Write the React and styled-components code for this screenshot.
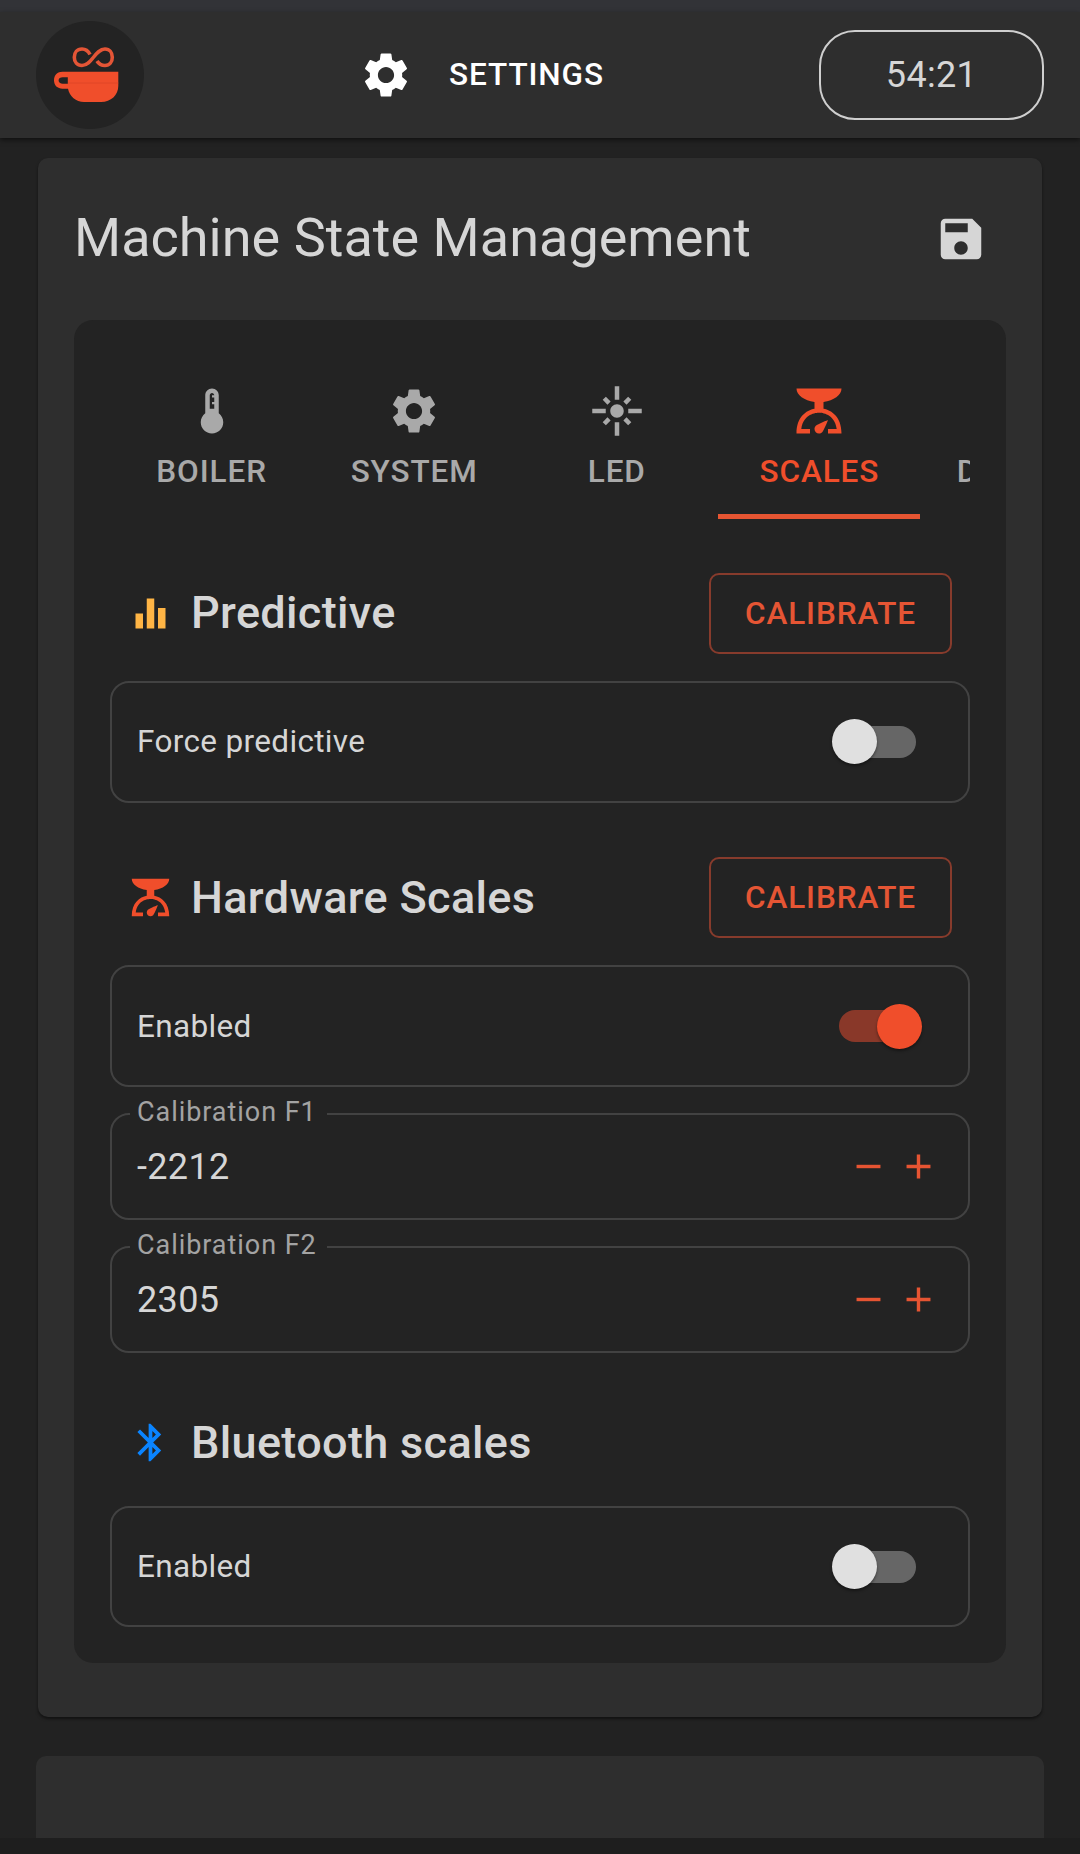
import React, { useState } from "react";
import styled, { createGlobalStyle } from "styled-components";
import {
  MdSettings,
  MdSave,
  MdDeviceThermostat,
  MdFlare,
  MdScale,
  MdEqualizer,
  MdBluetooth,
  MdAdd,
  MdRemove,
} from "react-icons/md";

const accent = "#f04e2b";
const surface = "#2e2e2e";
const base = "#222222";
const panel = "#232323";
const textColor = "#d6d6d6";

const GlobalStyle = createGlobalStyle`
  *, *::before, *::after { box-sizing: border-box; }
  body {
    margin: 0;
    background: ${base};
    color: ${textColor};
    font-family: Roboto, "Liberation Sans", sans-serif;
    -webkit-font-smoothing: antialiased;
  }
  svg { display: block; }
`;

const Page = styled.div`
  display: flex;
  flex-direction: column;
  height: 1854px;
  overflow: hidden;
  background: ${base};
`;

const StatusStrip = styled.div`
  flex: none;
  height: 12px;
  background: #323337;
`;

const AppBar = styled.header`
  flex: none;
  display: flex;
  align-items: center;
  justify-content: space-between;
  height: 126px;
  padding: 0 36px;
  background: ${surface};
  box-shadow: 0 2px 5px rgba(0, 0, 0, 0.55);
`;

const Logo = styled.div`
  width: 108px;
  height: 108px;
  border-radius: 50%;
  background: ${panel};
`;

const NavTitle = styled.div`
  display: flex;
  align-items: center;
  gap: 36px;
  color: #fff;
  font-size: 31.5px;
  font-weight: 500;
  letter-spacing: 0.9px;
  line-height: 36px;
`;

const Timer = styled.div`
  display: flex;
  align-items: center;
  justify-content: center;
  width: 225px;
  height: 90px;
  border: 2px solid #cfcfcf;
  border-radius: 36px;
  font-size: 36px;
  letter-spacing: 0.34px;
`;

const Content = styled.main`
  flex: 1;
  min-height: 0;
  display: flex;
  flex-direction: column;
  gap: 39px;
  padding-top: 20px;
  overflow: hidden;
`;

const Card = styled.section`
  flex: none;
  margin: 0 38px;
  padding: 0 36px 54px;
  border-radius: 10px;
  background: ${surface};
  box-shadow: 0 2px 3px rgba(0, 0, 0, 0.5);
`;

const NextCard = styled.section`
  flex: none;
  height: 120px;
  margin: 0 36px;
  border-radius: 10px;
  background: ${surface};
`;

const BottomStrip = styled.div`
  flex: none;
  height: 16px;
  background: #1e1e1e;
`;

const CardHeader = styled.div`
  display: flex;
  align-items: center;
  justify-content: space-between;
  height: 162px;
  padding-right: 18px;
`;

const CardTitle = styled.h1`
  margin: 0;
  padding-bottom: 2px;
  font-size: 54px;
  font-weight: 400;
  line-height: 72px;
  letter-spacing: 0.02px;
`;

const Panel = styled.div`
  padding: 36px;
  border-radius: 19px;
  background: ${panel};
`;

const Tabs = styled.div`
  display: flex;
  height: 163px;
  overflow: hidden;
`;

const Tab = styled.button`
  flex: none;
  display: flex;
  flex-direction: column;
  align-items: center;
  gap: 15px;
  width: 202.6px;
  padding: 28px 0 0 0.6px;
  border: 0;
  border-bottom: 5px solid ${(p) => (p.$active ? "#e65532" : "transparent")};
  background: none;
  color: ${(p) => (p.$active ? accent : "#a9a9a9")};
  font: 500 31.5px/38px Roboto, sans-serif;
  letter-spacing: 0.9px;
`;

const SectionHeader = styled.div`
  display: flex;
  align-items: center;
  gap: 18px;
  height: ${(p) => p.$height}px;
  margin: 54px 0 ${(p) => p.$after}px;
  padding: 0 18px;
  svg { color: ${(p) => p.$color}; }
`;

const SectionTitle = styled.h2`
  flex: 1;
  margin: 0;
  padding-bottom: ${(p) => (p.$raised ? 2 : 0)}px;
  font-size: 45px;
  font-weight: 500;
  letter-spacing: 0.34px;
  line-height: 69px;
`;

const OutlineButton = styled.button`
  width: 243px;
  height: 81px;
  padding: 0;
  border: 2px solid #873b2c;
  border-radius: 10px;
  background: none;
  color: #e55534;
  font: 500 31.5px/36px Roboto, sans-serif;
  letter-spacing: 0.9px;
`;

const Box = styled.div`
  display: flex;
  align-items: center;
  justify-content: space-between;
  height: ${(p) => p.$height || 122}px;
  padding: 0 46px 0 25px;
  border: 2px solid #424242;
  border-radius: 19px;
`;

const BoxLabel = styled.span`
  padding: ${(p) => (p.$lowered ? "1px 0 0" : "0 0 1px")};
  font-size: 31.5px;
  line-height: 40px;
  letter-spacing: 0.34px;
`;

const Thumb = styled.span`
  flex: none;
  width: 45px;
  height: 45px;
  margin: ${(p) => (p.$on ? "1px -6px 0 0" : "0 0 1px -7px")};
  border-radius: 50%;
  background: ${(p) => (p.$on ? accent : "#e0e0e0")};
  box-shadow: 0 2px 3px rgba(0, 0, 0, 0.4);
`;

const SwitchTrack = styled.button`
  display: flex;
  align-items: center;
  justify-content: ${(p) => (p.$on ? "flex-end" : "flex-start")};
  width: 77px;
  height: 32px;
  margin-right: 6px;
  padding: 0;
  border: 0;
  border-radius: 16px;
  background: ${(p) => (p.$on ? "#893829" : "#666666")};
`;

const NumberBox = styled.div`
  position: relative;
  display: flex;
  align-items: center;
  height: 107px;
  margin-top: 26px;
  padding: 0 29px 0 25px;
  border: 2px solid #424242;
  border-radius: 19px;
`;

const NumberLabel = styled.label`
  position: absolute;
  left: 18px;
  top: -18px;
  width: 197px;
  padding-left: 7px;
  background: ${panel};
  color: #a3a3a3;
  font-size: 27px;
  line-height: 30px;
  letter-spacing: 0.95px;
  white-space: nowrap;
`;

const NumberValue = styled.span`
  flex: 1;
  font-size: 36px;
  letter-spacing: 0.34px;
`;

const StepButton = styled.button`
  display: flex;
  margin-left: 9px;
  padding: 0;
  border: 0;
  background: none;
  color: #e65432;
`;

function CupLogo() {
  return (
    <Logo>
      <svg width="108" height="108" viewBox="36 21 108 108" fill="none">
        <path
          d="M90 54.5C88 50.5 85 49 82 49C77 49 74.3 52.6 74.3 57.2C74.3 62 77 65.5 82 65.5C92 65.5 95 49 105 49C109.5 49 112.3 52.6 112.3 57.2C112.3 62 109.5 65.5 105 65.5C101.5 65.5 98.8 64 97 61"
          stroke="#e45536"
          strokeWidth="3.6"
        />
        <path
          fill={accent}
          fillRule="evenodd"
          d="M118.3 71.8V86C118.3 95 111 102 101 102H84C76 102 69.5 96 68 88.7H62.5C57.5 88.7 54 85.5 54 80.3C54 75.2 57.5 71.8 62.5 71.8ZM67.8 77.3H62.7C60.3 77.3 58.6 78.5 58.6 80.5C58.6 82.5 60.3 83.7 62.7 83.7H67.8Z"
        />
        <path d="M68 83H118.3" stroke="#dc4526" strokeWidth="0.8" />
      </svg>
    </Logo>
  );
}

function Switch({ initial = false }) {
  const [on, setOn] = useState(initial);
  return (
    <SwitchTrack role="switch" aria-checked={on} $on={on} onClick={() => setOn(!on)}>
      <Thumb $on={on} />
    </SwitchTrack>
  );
}

function NumberField({ label, initial }) {
  const [value, setValue] = useState(initial);
  return (
    <NumberBox>
      <NumberLabel>{label}</NumberLabel>
      <NumberValue>{value}</NumberValue>
      <StepButton aria-label="Decrease" onClick={() => setValue(value - 1)}>
        <MdRemove size={41} />
      </StepButton>
      <StepButton aria-label="Increase" onClick={() => setValue(value + 1)}>
        <MdAdd size={41} />
      </StepButton>
    </NumberBox>
  );
}

const tabs = [
  { name: "BOILER", Icon: MdDeviceThermostat },
  { name: "SYSTEM", Icon: MdSettings },
  { name: "LED", Icon: MdFlare },
  { name: "SCALES", Icon: MdScale },
  { name: "DISPLAY" },
];

export default function App() {
  const [active, setActive] = useState("SCALES");
  return (
    <Page>
      <GlobalStyle />
      <StatusStrip />
      <AppBar>
        <CupLogo />
        <NavTitle>
          <MdSettings size={54} />
          SETTINGS
        </NavTitle>
        <Timer>54:21</Timer>
      </AppBar>
      <Content>
        <Card>
          <CardHeader>
            <CardTitle>Machine State Management</CardTitle>
            <MdSave size={54} />
          </CardHeader>
          <Panel>
            <Tabs>
              {tabs.map(({ name, Icon }) => (
                <Tab key={name} $active={name === active} onClick={() => setActive(name)}>
                  {Icon ? <Icon size={54} /> : <svg width="54" height="54" />}
                  {name}
                </Tab>
              ))}
            </Tabs>

            <SectionHeader $height={81} $after={27} $color="#ffb545">
              <MdEqualizer size={45} />
              <SectionTitle $raised>Predictive</SectionTitle>
              <OutlineButton>CALIBRATE</OutlineButton>
            </SectionHeader>
            <Box>
              <BoxLabel>Force predictive</BoxLabel>
              <Switch />
            </Box>

            <SectionHeader $height={81} $after={27} $color={accent}>
              <MdScale size={45} />
              <SectionTitle>Hardware Scales</SectionTitle>
              <OutlineButton>CALIBRATE</OutlineButton>
            </SectionHeader>
            <Box>
              <BoxLabel $lowered>Enabled</BoxLabel>
              <Switch initial />
            </Box>
            <NumberField label="Calibration F1" initial={-2212} />
            <NumberField label="Calibration F2" initial={2305} />

            <SectionHeader $height={71} $after={28} $color="#0a84ff">
              <MdBluetooth size={45} />
              <SectionTitle>Bluetooth scales</SectionTitle>
            </SectionHeader>
            <Box $height={121}>
              <BoxLabel $lowered>Enabled</BoxLabel>
              <Switch />
            </Box>
          </Panel>
        </Card>
        <NextCard />
      </Content>
      <BottomStrip />
    </Page>
  );
}
